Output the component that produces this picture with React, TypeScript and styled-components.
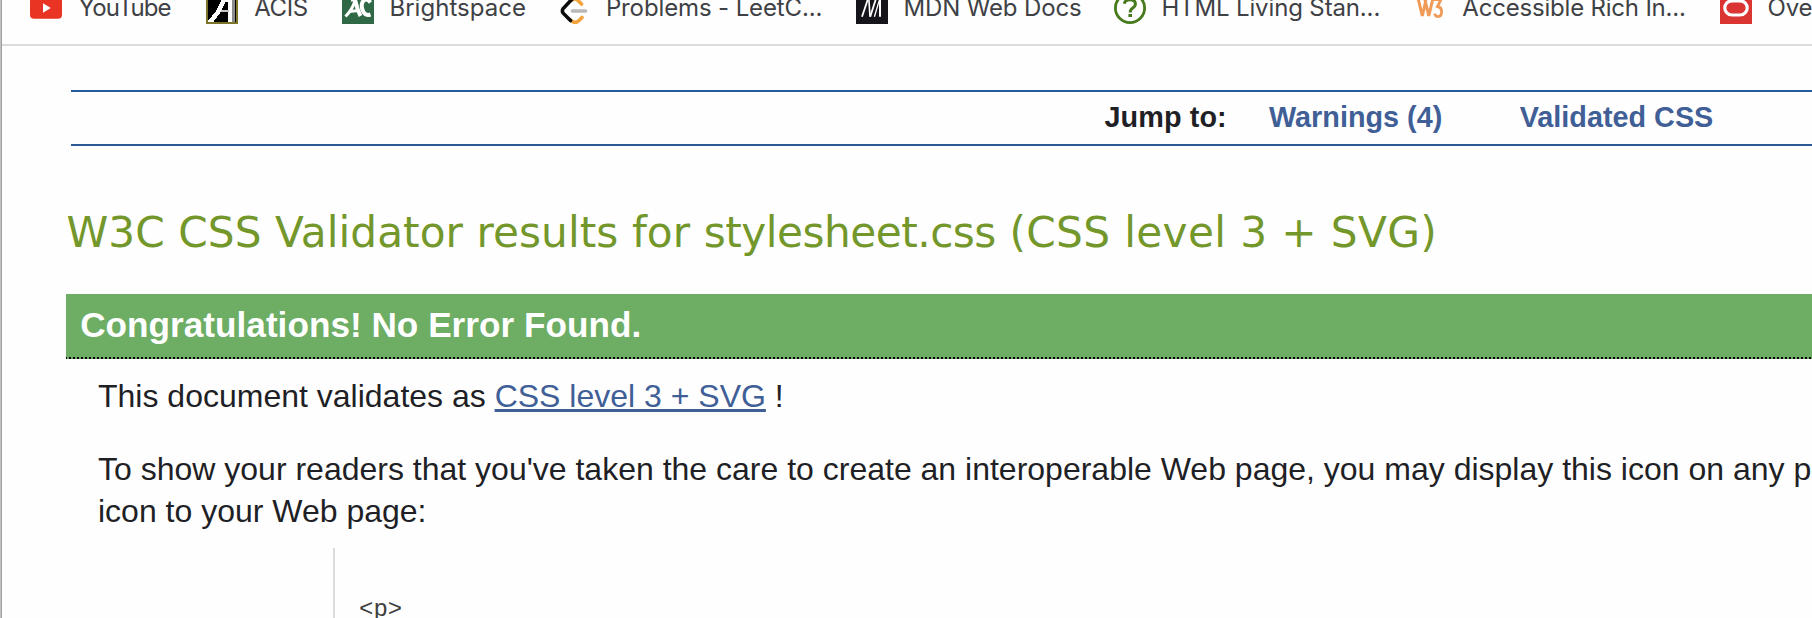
import React from "react";
import styled, { createGlobalStyle } from "styled-components";

const GlobalStyle = createGlobalStyle`
  * { box-sizing: border-box; }
  body {
    margin: 0;
    background: #fefefe;
    overflow: hidden;
  }
`;

const Window = styled.div`
  width: 1812px;
  height: 618px;
  overflow: hidden;
  display: flex;
  flex-direction: column;
  border-left: 1px solid #c2c2c2;
  box-shadow: inset 1px 0 0 #a0a0a0;
  padding-left: 1px;
  background: #fefefe;
  color: #1f1f26;
  font-family: "Liberation Sans", Arial, sans-serif;
`;

const BookmarksBar = styled.div`
  flex: none;
  height: 46px;
  overflow: hidden;
  border-bottom: 2px solid #dcdcdc;
  background: #fefefe;
`;

const BookmarkList = styled.div`
  display: flex;
  margin-top: -8px;
  padding-left: 28px;
`;

const Bookmark = styled.div<{ $width: number; $gap: number }>`
  flex: none;
  display: flex;
  align-items: flex-start;
  width: ${(p) => p.$width}px;
  gap: ${(p) => p.$gap}px;
`;

const BookmarkIcon = styled.svg`
  flex: none;
  display: block;
  width: 32px;
  height: 32px;
`;

const BookmarkLabel = styled.span<{ $tracking: number }>`
  font-family: Inter, sans-serif;
  font-size: 24px;
  line-height: 32px;
  letter-spacing: ${(p) => p.$tracking}px;
  white-space: nowrap;
  color: #3e4145;
`;

const Page = styled.main`
  flex: none;
  padding: 44px 0 0 64px;
`;

const JumpBar = styled.nav`
  display: flex;
  height: 56px;
  margin-left: 5px;
  padding-left: 1033.4px;
  border-top: 2px solid #235c96;
  border-bottom: 2px solid #2a5a96;
  font-size: 28.8px;
  font-weight: bold;
  line-height: 50px;
  white-space: nowrap;
`;

const JumpLabel = styled.span`
  margin-right: 42.2px;
  letter-spacing: 0.1px;
`;

const JumpLink = styled.a`
  margin-right: 77.4px;
  color: #415f97;
  text-decoration: none;
`;

const Title = styled.h2`
  margin: 62px 0 36px;
  padding-left: 0.5px;
  font-family: "DejaVu Sans", Verdana, sans-serif;
  font-size: 42.24px;
  font-weight: normal;
  line-height: 50px;
  letter-spacing: 0.06px;
  white-space: nowrap;
  color: #73972b;
`;

const FileName = styled.span`
  letter-spacing: -0.5px;
`;

const Profile = styled.span`
  letter-spacing: 0.36px;
`;

const Banner = styled.h3`
  margin: 0;
  height: 65px;
  padding-left: 14.2px;
  font-size: 35.2px;
  line-height: 61px;
  white-space: nowrap;
  color: #fff;
  background:
    repeating-linear-gradient(90deg, #000 0 2px, transparent 2px 4px) -1px 100% / 1752px 2px no-repeat,
    #6dad64;
`;

const Message = styled.div`
  padding: 16px 0 0 32px;
  font-size: 32px;
  line-height: 42px;
  white-space: nowrap;
`;

const Paragraph = styled.p`
  margin: 0;
  & + & {
    margin-top: 31px;
  }
`;

const SpecLink = styled.a`
  color: #415f97;
  text-decoration: underline;
  text-decoration-thickness: 3px;
  text-underline-offset: 2px;
  text-decoration-skip-ink: none;
`;

const Code = styled.pre`
  margin: 16px 0 0 235px;
  height: 200px;
  padding: 48px 0 0 24px;
  border-left: 2px solid #dcdcdc;
  font-family: "Liberation Mono", monospace;
  font-size: 24px;
  line-height: 28px;
  color: #3f3f3f;
`;

const bookmarks = [
  {
    label: "YouTube", width: 176, gap: 16.6, tracking: -0.9,
    icon: (
      <>
        <rect x="0" y="4.8" width="32" height="22" rx="4" fill="#e93323" />
        <path d="M13 11.3 L20.8 16 L13 20.7 Z" fill="#fff" />
      </>
    ),
  },
  {
    label: "ACIS", width: 136, gap: 16.2, tracking: -0.4,
    icon: (
      <>
        <rect x="1" y="1" width="30" height="30" fill="#000" stroke="#7c7428" strokeWidth="2" />
        <g shapeRendering="crispEdges" fill="none">
          <path d="M27 6 V30" stroke="#8c8c8c" strokeWidth="4" />
          <path d="M24 6 V30" stroke="#fff" strokeWidth="4" />
          <path d="M15 19 H23" stroke="#c4c4c4" strokeWidth="2" />
          <path d="M5 29 L12 20 L19 6" stroke="#fff" strokeWidth="4.5" />
          <path d="M17 8 H25" stroke="#fff" strokeWidth="3" />
          <path d="M2 29 H8" stroke="#fff" strokeWidth="2" />
        </g>
      </>
    ),
  },
  {
    label: "Brightspace", width: 216, gap: 15.4, tracking: 0.04,
    icon: (
      <>
        <rect width="32" height="32" fill="#2f6844" />
        <g fill="none" stroke="#fff">
          <path d="M9 7.5 H13 Q15 17 18.5 24" strokeWidth="4" />
          <path d="M13 9 Q10 18 3.5 24.5" strokeWidth="3" />
          <path d="M7 19.5 L17 18.5" strokeWidth="3" />
          <path d="M28.5 10.5 Q24 5 20.5 10 Q18.5 15 21.5 20 Q24 24 28.5 22.5" strokeWidth="4" />
        </g>
      </>
    ),
  },
  {
    label: "Problems - LeetC...", width: 298, gap: 15.9, tracking: -0.12,
    icon: (
      <g fill="none" strokeWidth="3.6" strokeLinecap="round">
        <path d="M14.5 19 H27.5" stroke="#b9b7b8" />
        <path d="M12.5 28 Q17 32.5 21 28.5 L24 25.5 M14 8 Q17 5.5 20 8.5 L23.5 12" stroke="#f2a33c" />
        <path d="M17 4 L5.2 16.5 Q3.6 19 5.2 21.2 L12.5 28.5" stroke="#0b0b0b" />
      </g>
    ),
  },
  {
    label: "MDN Web Docs", width: 258, gap: 15.4, tracking: -0.13,
    icon: (
      <>
        <rect width="32" height="32" fill="#15141a" />
        <g fill="none" stroke="#fff">
          <path d="M6 24.7 L12.3 6" strokeWidth="1.8" />
          <path d="M12.8 6 L14 24.7" strokeWidth="1.6" />
          <path d="M14.2 24.7 L20.2 6" strokeWidth="1.8" />
          <path d="M18.4 24.7 L24 6" strokeWidth="1.3" />
          <path d="M24 6 V24.7" strokeWidth="2" />
        </g>
      </>
    ),
  },
  {
    label: "HTML Living Stan...", width: 300, gap: 15.4, tracking: -0.14,
    icon: (
      <g fill="none" stroke="#477a1c">
        <circle cx="16" cy="16" r="14.6" strokeWidth="2.8" />
        <path d="M10.3 11.8 Q11 7.8 16 7.8 Q21.4 7.8 21.4 12 Q21.4 14.3 18.8 16 Q16.2 17.6 16.2 20.4" strokeWidth="3" />
        <path d="M16.2 22 V25" strokeWidth="3.6" />
      </g>
    ),
  },
  {
    label: "Accessible Rich In...", width: 306, gap: 16.3, tracking: -0.2,
    icon: (
      <g fill="none" stroke="#f09a58">
        <path d="M4 6 L8.3 24 L12 8 M10.5 6 L14.8 24 L19 6" strokeWidth="3" />
        <path d="M19.5 7.5 H27 L23.5 14.5 Q27.6 15.2 27.6 19.8 Q27.6 24.6 24 24.6 Q21.5 24.6 20.6 21.6" strokeWidth="2.8" />
      </g>
    ),
  },
  {
    label: "Ove", width: 92, gap: 15.4, tracking: -0.1,
    icon: (
      <>
        <rect width="32" height="32" fill="#da3530" />
        <rect x="4.8" y="8.8" width="22.4" height="14.2" rx="7.1" fill="none" stroke="#fff" strokeWidth="3.2" />
      </>
    ),
  },
];

export default function App() {
  return (
    <>
      <GlobalStyle />
      <Window>
        <BookmarksBar>
          <BookmarkList>
            {bookmarks.map((b) => (
              <Bookmark key={b.label} $width={b.width} $gap={b.gap}>
                <BookmarkIcon viewBox="0 0 32 32">{b.icon}</BookmarkIcon>
                <BookmarkLabel $tracking={b.tracking}>{b.label}</BookmarkLabel>
              </Bookmark>
            ))}
          </BookmarkList>
        </BookmarksBar>
        <Page>
          <JumpBar>
            <JumpLabel>Jump to:</JumpLabel>
            <JumpLink>Warnings (4)</JumpLink>
            <JumpLink>Validated CSS</JumpLink>
          </JumpBar>
          <Title>
            W3C CSS Validator results for <FileName>stylesheet.css</FileName> <Profile>(CSS level 3 + SVG)</Profile>
          </Title>
          <Banner>Congratulations! No Error Found.</Banner>
          <Message>
            <Paragraph>
              This document validates as <SpecLink>CSS level 3 + SVG</SpecLink> !
            </Paragraph>
            <Paragraph>
              To show your readers that you've taken the care to create an interoperable Web page, you may display this icon on any p
              <br />
              icon to your Web page:
            </Paragraph>
            <Code>{"<p>"}</Code>
          </Message>
        </Page>
      </Window>
    </>
  );
}
